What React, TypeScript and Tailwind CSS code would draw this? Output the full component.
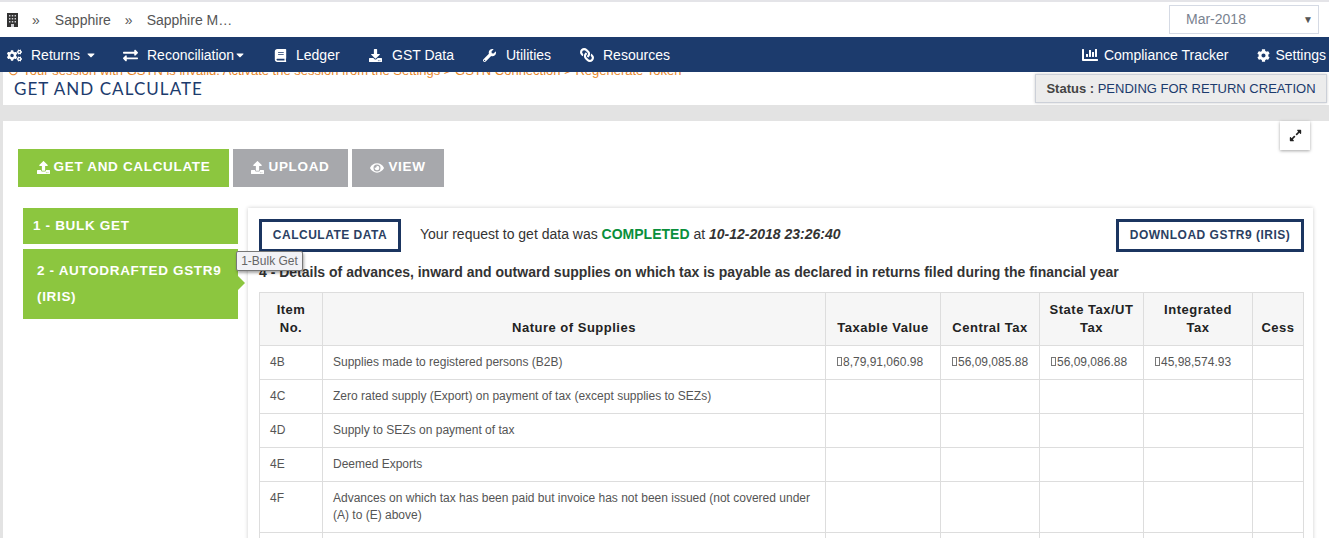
import * as React from 'react';
import {
  FaBook,
  FaCaretDown,
  FaChartBar,
  FaCog,
  FaCogs,
  FaDownload,
  FaExchangeAlt,
  FaExpandAlt,
  FaEye,
  FaLink,
  FaUpload,
  FaWrench,
} from 'react-icons/fa';

const rows = [
  { item: '4B', label: 'Supplies made to registered persons (B2B)', values: ['8,79,91,060.98', '56,09,085.88', '56,09,086.88', '45,98,574.93'] },
  { item: '4C', label: 'Zero rated supply (Export) on payment of tax (except supplies to SEZs)', values: [] },
  { item: '4D', label: 'Supply to SEZs on payment of tax', values: [] },
  { item: '4E', label: 'Deemed Exports', values: [] },
  { item: '4F', label: 'Advances on which tax has been paid but invoice has not been issued (not covered under (A) to (E) above)', values: [] },
  { item: '', label: '', values: [] },
];

const thClass = 'border border-[#ddd] px-2 pt-[8px] pb-[8px] align-bottom text-center text-[13px] leading-[18px] font-bold tracking-[0.5px] text-[#222]';
const tdClass = 'h-[34px] border border-[#ddd] px-[10px] py-[8px] align-top text-[12px] leading-[17px] text-[#555]';
const tabClass = 'flex h-[38px] items-center justify-center gap-[4px] pb-[1px] text-[13.5px] font-bold tracking-[0.67px] text-white';
const outlineClass = 'flex h-[33px] items-center justify-center border-[3px] border-[#1b3560] pb-[1px] text-[12px] font-bold tracking-[0.5px] text-[#2b3f63]';

const NavItem = ({ icon, label, caret, className }: { icon: React.ReactNode; label: string; caret?: React.ReactNode; className?: string }) => (
  <div className={`flex items-center pt-[1px] text-[14px] text-white ${className || ''}`}>
    {icon}
    <span>{label}</span>
    {caret}
  </div>
);

export default function App() {
  return (
    <div className="relative h-[538px] w-[1329px] overflow-hidden bg-[#e3e3e3] font-['Liberation_Sans',Arial,sans-serif]">
      {/* top bar */}
      <div className="flex h-[37px] items-center border-t-2 border-[#e4e4e8] bg-white pr-[10px] pl-[7px]">
        <svg viewBox="0 0 11 14" className="h-[14px] w-[11px]">
          <rect width="11" height="14" fill="#333" />
          <path d="M2 2h1.4v1.4H2zM4.8 2h1.4v1.4H4.8zM7.6 2H9v1.4H7.6zM2 5h1.4v1.4H2zM4.8 5h1.4v1.4H4.8zM7.6 5H9v1.4H7.6zM2 8h1.4v1.4H2zM4.8 8h1.4v1.4H4.8zM7.6 8H9v1.4H7.6zM4 11h3v3H4z" fill="#cfcfd4" />
        </svg>
        <span className="ml-[14px] pt-[1px] text-[14px] text-[#555]">»</span>
        <span className="ml-[15px] pt-[1px] text-[14px] text-[#555]">Sapphire</span>
        <span className="ml-[14px] pt-[1px] text-[14px] text-[#555]">»</span>
        <span className="ml-[14px] pt-[1px] text-[14px] text-[#555]">Sapphire M…</span>
        <div className="ml-auto flex h-[29px] w-[150px] items-center justify-between border border-[#d5dae4] pr-[5px] pl-[16px] text-[14px] text-[#7a8290]">
          <span>Mar-2018</span>
          <span className="text-[10px] text-[#555]">▼</span>
        </div>
      </div>

      {/* nav */}
      <div className="relative z-10 flex h-[35px] items-center bg-[#1c3b6d] pl-[7px]">
        <NavItem icon={<FaCogs className="mr-[9px] text-[15px]" />} label="Returns" caret={<FaCaretDown className="ml-[5px] text-[12px]" />} className="w-[116px]" />
        <NavItem icon={<FaExchangeAlt className="mr-[9px] text-[15px]" />} label="Reconciliation" caret={<FaCaretDown className="text-[12px]" />} className="w-[151px]" />
        <NavItem icon={<FaBook className="mr-[9px] text-[13px]" />} label="Ledger" className="w-[95px]" />
        <NavItem icon={<FaDownload className="mr-[10px] text-[13px]" />} label="GST Data" className="w-[114px]" />
        <NavItem icon={<FaWrench className="mr-[10px] text-[13px]" />} label="Utilities" className="w-[97px]" />
        <NavItem icon={<FaLink className="mr-[9px] -scale-x-100 text-[14px]" />} label="Resources" />
        <NavItem icon={<FaChartBar className="mr-[6px] text-[16px]" />} label="Compliance Tracker" className="ml-auto" />
        <NavItem icon={<FaCog className="mr-[5px] text-[13px]" />} label="Settings" className="mr-[3px] ml-[29px]" />
      </div>

      {/* title band */}
      <div className="relative ml-[3px] flex h-[33px] justify-between bg-white">
        <div className="absolute top-[-8px] left-[5px] text-[13px] leading-[14px] whitespace-nowrap text-[#e8872a]">
          ⊙ Your session with GSTN is invalid. Activate the session from the Settings &gt; GSTN Connection &gt; Regenerate Token
        </div>
        <div className="pt-[6px] pl-[11px] font-['Lato',sans-serif] text-[17px] leading-[22px] tracking-[1.05px] text-[#1c3b6d]">
          GET AND CALCULATE
        </div>
        <div className="relative mt-[2px] mr-[2px] flex h-[29px] w-[292px] items-center justify-center border border-[#ccd0d8] bg-[#ececec] text-[13px] font-bold text-[#444] shadow-[0_0_3px_rgba(0,0,0,0.2)]">
          Status :&nbsp;<span className="font-normal text-[#1c3b6d]">PENDING FOR RETURN CREATION</span>
        </div>
      </div>

      {/* body */}
      <div className="relative mt-[16px] ml-[3px] h-[500px] bg-white">
        <div className="absolute top-0 right-[19px] flex h-[29px] w-[30px] items-center justify-center bg-white text-[13px] text-[#222] shadow-[0_1px_3px_rgba(0,0,0,0.35)]">
          <FaExpandAlt />
        </div>

        <div className="flex gap-[4px] pt-[28px] pl-[15px]">
          <div className={`${tabClass} w-[211px] bg-[#8cc63f]`}>
            <FaUpload className="text-[13px]" /> GET AND CALCULATE
          </div>
          <div className={`${tabClass} w-[115px] bg-[#a7a8ac]`}>
            <FaUpload className="text-[13px]" /> UPLOAD
          </div>
          <div className={`${tabClass} w-[92px] bg-[#a7a8ac]`}>
            <FaEye className="text-[14px]" /> VIEW
          </div>
        </div>

        <div className="mt-[21px] flex pl-[20px]">
          {/* steps */}
          <div className="flex w-[215px] shrink-0 flex-col gap-[5px]">
            <div className="flex h-[36px] items-center bg-[#8cc63f] pl-[10px] text-[13.5px] font-bold tracking-[0.67px] text-white">1 - BULK GET</div>
            <div className="relative h-[70px] bg-[#8cc63f] pt-[9px] pl-[14px] text-[13.5px] leading-[26px] font-bold tracking-[0.67px] text-white">
              2 - AUTODRAFTED GSTR9
              <br />
              (IRIS)
              <div className="absolute top-[27px] right-[-7px] h-0 w-0 border-y-[7px] border-l-[7px] border-y-transparent border-l-[#8cc63f]" />
            </div>
          </div>

          {/* panel */}
          <div className="ml-[10px] h-[400px] w-[1065px] shrink-0 bg-white px-[11px] pt-[11px] shadow-[0_0_4px_rgba(0,0,0,0.2)]">
            <div className="flex w-[1045px] items-center">
              <div className={`${outlineClass} w-[142px]`}>CALCULATE DATA</div>
              <div className="mb-[2px] ml-[19px] text-[14px] text-[#333]">
                Your request to get data was <span className="font-bold text-[#0a8f3c]">COMPLETED</span> at <span className="font-bold italic">10-12-2018 23:26:40</span>
              </div>
              <div className={`${outlineClass} ml-auto w-[188px]`}>DOWNLOAD GSTR9 (IRIS)</div>
            </div>

            <div className="mt-[11px] text-[14px] leading-[18px] font-bold whitespace-nowrap text-[#333]">
              4 - Details of advances, inward and outward supplies on which tax is payable as declared in returns filed during the financial year
            </div>

            <table className="mt-[11px] w-[1044px] table-fixed border-collapse">
              <colgroup>
                <col className="w-[63px]" />
                <col className="w-[503px]" />
                <col className="w-[115px]" />
                <col className="w-[99px]" />
                <col className="w-[104px]" />
                <col className="w-[109px]" />
                <col className="w-[51px]" />
              </colgroup>
              <thead>
                <tr className="bg-[#f6f6f6]">
                  <th className={thClass}>Item No.</th>
                  <th className={thClass}>Nature of Supplies</th>
                  <th className={thClass}>Taxable Value</th>
                  <th className={thClass}>Central Tax</th>
                  <th className={thClass}>State Tax/UT Tax</th>
                  <th className={thClass}>Integrated Tax</th>
                  <th className={thClass}>Cess</th>
                </tr>
              </thead>
              <tbody>
                {rows.map((r, n) => (
                  <tr key={n}>
                    <td className={tdClass}>{r.item}</td>
                    <td className={tdClass}>{r.label}</td>
                    {[0, 1, 2, 3].map((i) => (
                      <td key={i} className={tdClass}>
                        {r.values[i] && (
                          <>
                            <span className="mr-[1px] ml-[1px] inline-block h-[9px] w-[5px] border border-[#777]" />
                            {r.values[i]}
                          </>
                        )}
                      </td>
                    ))}
                    <td className={tdClass}></td>
                  </tr>
                ))}
              </tbody>
            </table>
          </div>
        </div>

        {/* tooltip */}
        <div className="absolute top-[130px] left-[233px] z-20 flex h-[20px] w-[67px] items-center justify-center rounded-[2px] border border-[#777] bg-[#f2f2f6] text-[12px] text-[#666] shadow-[1px_2px_3px_rgba(0,0,0,0.35)]">
          1-Bulk Get
        </div>
      </div>
    </div>
  );
}
